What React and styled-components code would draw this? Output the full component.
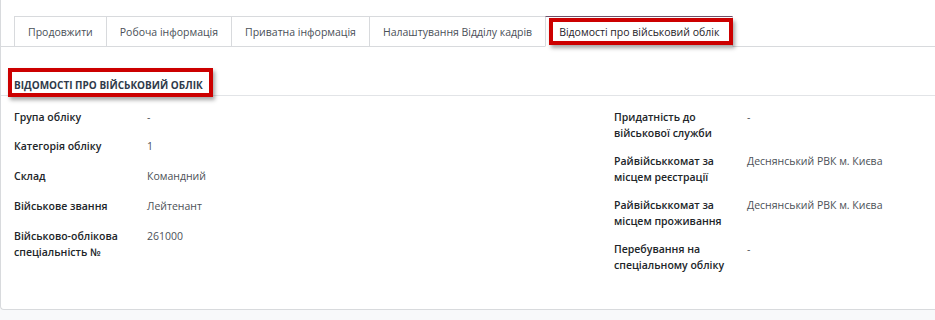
import React from "react";
import styled, { createGlobalStyle } from "styled-components";

const tabs = [
  "Продовжити",
  "Робоча інформація",
  "Приватна інформація",
  "Налаштування Відділу кадрів",
  "Відомості про військовий облік",
];

const leftFields = [
  ["Група обліку", "-"],
  ["Категорія обліку", "1"],
  ["Склад", "Командний"],
  ["Військове звання", "Лейтенант"],
  ["Військово-облікова спеціальність №", "261000"],
];

const rightFields = [
  ["Придатність до військової служби", "-"],
  ["Райвійськкомат за місцем реєстрації", "Деснянський РВК м. Києва"],
  ["Райвійськкомат за місцем проживання", "Деснянський РВК м. Києва"],
  ["Перебування на спеціальному обліку", "-"],
];

const FieldColumn = ({ fields }) => (
  <FieldList>
    {fields.map(([l, v]) => (
      <Row key={l}>
        <Label>{l}</Label>
        <Value>{v}</Value>
      </Row>
    ))}
  </FieldList>
);

const App = () => {
  return (
    <>
      <GlobalStyle />
      <Page>
        <Card>
          <TabBar>
            {tabs.map((t, i) => {
              const active = i === tabs.length - 1;
              return (
                <Tab key={t} $active={active}>
                  {t}
                  {active && <TabMarker />}
                </Tab>
              );
            })}
          </TabBar>
          <Section>
            <Heading>
              Відомості про військовий облік
              <HeadingMarker />
            </Heading>
            <Columns>
              <FieldColumn fields={leftFields} />
              <FieldColumn fields={rightFields} />
            </Columns>
          </Section>
        </Card>
      </Page>
    </>
  );
};

export default App;

const GlobalStyle = createGlobalStyle`
  body {
    margin: 0;
    background: #f8f9fa;
    font-family: "Open Sans", "Noto Sans", sans-serif;
  }
`;

const Page = styled.div`
  width: 935px;
  height: 320px;
  overflow: hidden;
  background: #f8f9fa;
`;

const Card = styled.div`
  background: #fff;
  border: 1px solid #d8dadd;
  border-top: none;
  border-right: none;
  border-bottom-left-radius: 4px;
  height: 310px;
  box-sizing: border-box;
  padding-top: 16px;
`;

const TabBar = styled.div`
  display: flex;
  padding-left: 13px;
  border-bottom: 1px solid #d8dadd;
`;

const Tab = styled.div`
  position: relative;
  height: 29px;
  padding: 0 13px;
  margin-left: -1px;
  margin-bottom: -1px;
  display: flex;
  align-items: center;
  font-size: 10.5px;
  color: ${(p) => (p.$active ? "#1f2329" : "#4a5058")};
  background: #fff;
  border: 1px solid #d8dadd;
  border-top-color: ${(p) => (p.$active ? "#71506a" : "#d8dadd")};
  border-bottom-color: ${(p) => (p.$active ? "#fff" : "#d8dadd")};
  white-space: nowrap;
  &:first-child {
    margin-left: 0;
  }
`;

const Marker = styled.span`
  position: absolute;
  border: 4px solid #cc0000;
  box-shadow: 2px 3px 4px rgba(0, 0, 0, 0.35);
  pointer-events: none;
`;

const TabMarker = styled(Marker)`
  top: 1px;
  bottom: 1px;
  left: 3px;
  right: -1px;
`;

const HeadingMarker = styled(Marker)`
  top: -9px;
  bottom: -2px;
  left: 7px;
  width: 205px;
  box-sizing: border-box;
`;

const Section = styled.div`
  padding-top: 30px;
`;

const Heading = styled.h3`
  position: relative;
  margin: 0;
  padding: 0 0 2px 13px;
  font-size: 10px;
  font-weight: 700;
  text-transform: uppercase;
  color: #2f3a4a;
  line-height: 16px;
  border-bottom: 1px solid #e2e4e7;
`;

const Columns = styled.div`
  display: grid;
  grid-template-columns: 600px 1fr;
  padding: 12.5px 0 0 13px;
`;

const FieldList = styled.div`
  display: flex;
  flex-direction: column;
`;

const Row = styled.div`
  display: grid;
  grid-template-columns: 133px 1fr;
  min-height: 18.8px;
  margin-bottom: 11px;
  font-size: 10.5px;
  line-height: 16.5px;
`;

const Label = styled.div`
  font-weight: 600;
  color: #212529;
  padding-right: 12px;
`;

const Value = styled.div`
  color: #4c5157;
`;
